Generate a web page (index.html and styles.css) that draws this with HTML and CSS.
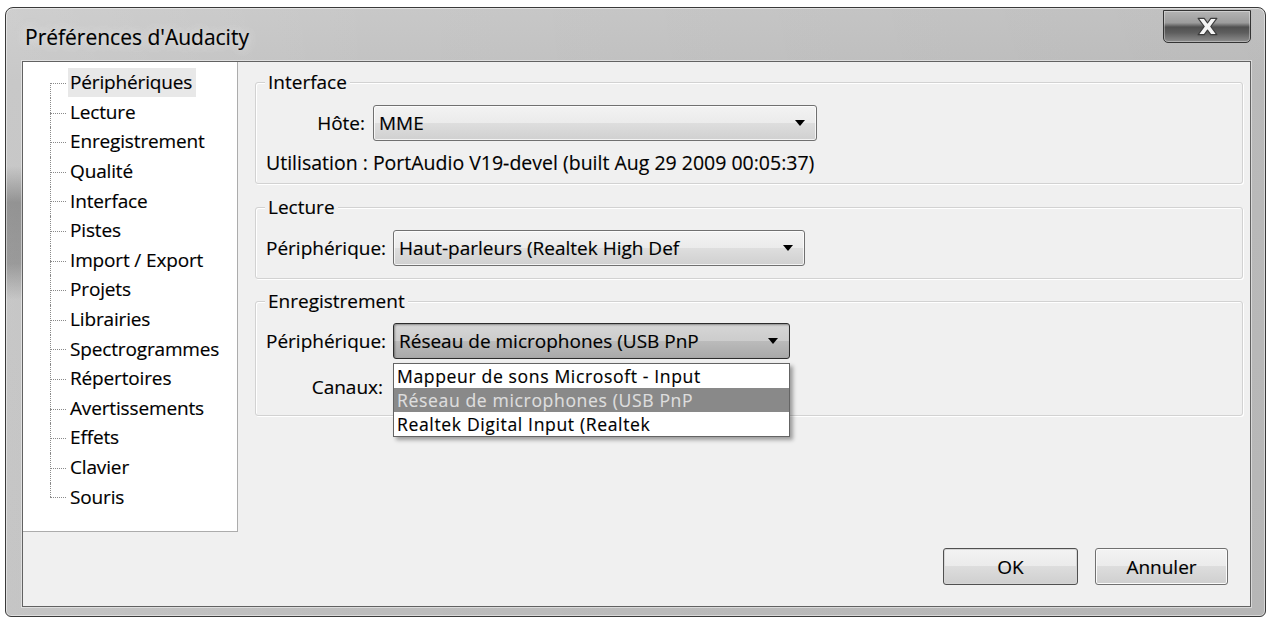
FILE: index.html
```html
<!DOCTYPE html>
<html lang="fr">
<head>
<meta charset="utf-8">
<title>Préférences d'Audacity</title>
<link rel="stylesheet" href="styles.css">
</head>
<body>
<div class="window">
  <div class="titlebar">
    <span class="title">Préférences d'Audacity</span>
    <button class="close" aria-label="Fermer">
      <svg width="21" height="19" viewBox="0 0 18 16"><polygon points="1,1 6.2,1 9,5 11.8,1 17,1 11.8,8 17,15 11.8,15 9,11 6.2,15 1,15 6.2,8" fill="#f6f6f6" stroke="#3c3c3c" stroke-width="1" stroke-linejoin="round"/></svg>
    </button>
  </div>
  <div class="client">
    <div class="main">
      <ul class="tree">
        <li><span class="sel">Périphériques</span></li>
        <li><span>Lecture</span></li>
        <li><span>Enregistrement</span></li>
        <li><span>Qualité</span></li>
        <li><span>Interface</span></li>
        <li><span>Pistes</span></li>
        <li><span>Import / Export</span></li>
        <li><span>Projets</span></li>
        <li><span>Librairies</span></li>
        <li><span>Spectrogrammes</span></li>
        <li><span>Répertoires</span></li>
        <li><span>Avertissements</span></li>
        <li><span>Effets</span></li>
        <li><span>Clavier</span></li>
        <li><span>Souris</span></li>
      </ul>
      <div class="panel">
        <fieldset class="group g-interface">
          <legend>Interface</legend>
          <div class="row">
            <label class="lbl lbl-host">Hôte:</label>
            <div class="combo w-host"><span>MME</span><i class="arrow"></i></div>
          </div>
          <div class="info">Utilisation : PortAudio V19-devel (built Aug 29 2009 00:05:37)</div>
        </fieldset>
        <fieldset class="group g-play">
          <legend>Lecture</legend>
          <div class="row">
            <label class="lbl">Périphérique:</label>
            <div class="combo w-play"><span>Haut-parleurs (Realtek High Def</span><i class="arrow"></i></div>
          </div>
        </fieldset>
        <fieldset class="group g-rec">
          <legend>Enregistrement</legend>
          <div class="row">
            <label class="lbl">Périphérique:</label>
            <div class="combo-wrap">
              <div class="combo open w-rec"><span>Réseau de microphones (USB PnP</span><i class="arrow"></i></div>
              <ul class="popup">
                <li>Mappeur de sons Microsoft - Input</li>
                <li class="hl">Réseau de microphones (USB PnP</li>
                <li>Realtek Digital Input (Realtek</li>
              </ul>
            </div>
          </div>
          <div class="row row-second">
            <label class="lbl">Canaux:</label>
          </div>
        </fieldset>
      </div>
    </div>
    <div class="buttons">
      <button class="btn btn-ok">OK</button>
      <button class="btn btn-cancel">Annuler</button>
    </div>
  </div>
</div>
</body>
</html>
```
FILE: styles.css
```css
* { box-sizing: border-box; }

html, body {
  margin: 0;
  padding: 0;
  background: #ffffff;
}

body {
  font-family: "Open Sans", "Noto Sans", "DejaVu Sans", sans-serif;
  font-size: 19px;
  color: #000;
  -webkit-text-stroke: 0.15px #000;
}

.window {
  margin: 7px 0 0 5px;
  width: 1261px;
  height: 610px;
  border: 1px solid #3a3a3a;
  border-radius: 8px 8px 6px 6px;
  padding: 0 14px 9px 16px;
  display: flex;
  flex-direction: column;
  background:
    linear-gradient(to bottom, transparent 26%, rgba(50,50,50,.35) 32%, rgba(50,50,50,.3) 42%, transparent 48%) 0 0 / 16px 100% no-repeat,
    linear-gradient(to right, rgba(255,255,255,.12) 0%, rgba(255,255,255,0) 30%, rgba(0,0,0,.04) 100%),
    linear-gradient(to bottom, #c8c8c8 0%, #c1c1c1 12%, #bdbdbd 100%);
  box-shadow: inset 0 0 0 1px rgba(255,255,255,.45);
}

.titlebar {
  height: 53px;
  flex: none;
  display: flex;
  justify-content: space-between;
  align-items: flex-start;
}

.title {
  margin: 15px 0 0 3px;
  font-size: 21px;
  line-height: 28px;
  color: #000;
  text-shadow: 0 0 8px #e4e4e4, 0 0 16px rgba(230,230,230,.9);
}

.close {
  margin-top: 2px;
  width: 88px;
  height: 33px;
  padding: 0;
  border: 1px solid #343434;
  border-radius: 0 0 5px 5px;
  background: linear-gradient(to bottom, #b4b4b4 0%, #9c9c9c 38%, #505050 52%, #5e5e5e 70%, #8e8e8e 100%);
  box-shadow: inset 0 0 0 1px rgba(255,255,255,.35);
  display: flex;
  align-items: center;
  justify-content: center;
}

.client {
  flex: 1;
  border: 1px solid #626262;
  background: #f0f0f0;
  display: flex;
  flex-direction: column;
  box-shadow: 0 0 0 1px rgba(255,255,255,.45);
}

.main {
  height: 470px;
  flex: none;
  display: flex;
}

/* tree */
.tree {
  width: 215px;
  flex: none;
  margin: 0;
  padding: 6.2px 0 0 0;
  list-style: none;
  background: #fff;
  border-right: 1px solid #acacac;
  border-bottom: 1px solid #acacac;
}

.tree li {
  position: relative;
  height: 29.6px;
  line-height: 29.6px;
  padding-left: 45px;
  white-space: nowrap;
}

.tree li::before {
  content: "";
  position: absolute;
  left: 27px;
  top: 50%;
  width: 16px;
  border-top: 1px dotted #8a8a8a;
}

.tree li::after {
  content: "";
  position: absolute;
  left: 27px;
  top: 0;
  bottom: 0;
  border-left: 1px dotted #8a8a8a;
}

.tree li:first-child::after { top: 50%; }
.tree li:last-child::after { bottom: 50%; }

.tree span {
  display: inline-block;
  padding: 0 4px 0 2px;
  line-height: 29px;
  letter-spacing: -0.15px;
}

.tree .sel { background: #e8e8e8; }

/* right panel */
.panel {
  flex: 1;
  padding: 8px 7px 0 17px;
}

.group {
  margin: 0;
  padding: 0 10px 8px 10px;
  min-width: 0;
  border: 1px solid #d2d2d2;
  border-radius: 3px;
  box-shadow: inset 1px 1px 0 #fff, 1px 1px 0 #fff;
}

.group legend {
  padding: 0 3px;
  margin-left: -1px;
  line-height: 24px;
  background: #f0f0f0;
}

.g-play { margin-top: 11px; padding-bottom: 12px; }
.g-rec { margin-top: 10px; padding-bottom: 10px; }

.row {
  display: flex;
  align-items: center;
  gap: 10px;
  height: 36px;
  line-height: 24px;
}

.g-interface .row { margin-top: 11px; gap: 8px; }
.g-play .row { margin-top: 11px; }
.g-rec .row { margin-top: 10px; }

.lbl {
  flex: none;
  width: 117px;
  text-align: right;
  white-space: nowrap;
}

.lbl-host { width: 99px; }

.info {
  margin-top: 10px;
  line-height: 24px;
  font-size: 19.5px;
  white-space: nowrap;
}

.combo {
  height: 36px;
  border: 1px solid #707070;
  border-radius: 3px;
  background: linear-gradient(to bottom, #f3f3f3 0%, #ebebeb 50%, #dedede 50%, #d0d0d0 100%);
  box-shadow: inset 0 0 0 1px rgba(255,255,255,.75);
  padding-left: 5px;
  display: flex;
  align-items: center;
  justify-content: space-between;
  line-height: 24px;
  white-space: nowrap;
}

.w-host { width: 444px; }
.w-play { width: 412px; }
.w-rec { width: 397px; }

.combo.open {
  border-color: #2c2c2c;
  background: linear-gradient(to bottom, #d6d6d6 0%, #cccccc 50%, #bbbbbb 50%, #a9a9a9 100%);
  box-shadow: inset 1px 1px 2px rgba(0,0,0,.35);
}

.arrow {
  flex: none;
  width: 0;
  height: 0;
  margin-right: 11px;
  border-left: 5px solid transparent;
  border-right: 5px solid transparent;
  border-top: 6px solid #000;
}

.combo-wrap {
  position: relative;
}

.popup {
  position: absolute;
  left: 0;
  top: 40px;
  width: 397px;
  margin: 0;
  padding: 0;
  list-style: none;
  background: #fff;
  border: 1px solid #646464;
  box-shadow: 3px 3px 4px rgba(0,0,0,.35);
  z-index: 2;
}

.popup li {
  height: 24px;
  line-height: 24px;
  padding-left: 3px;
  font-size: 17.6px;
  letter-spacing: 0.62px;
  white-space: nowrap;
}

.popup li.hl {
  background: #898989;
  color: #dedede;
  -webkit-text-stroke: 0.15px #dedede;
}

/* buttons */
.buttons {
  display: flex;
  justify-content: flex-end;
  gap: 17px;
  margin-top: 16px;
  padding-right: 22px;
}

.btn {
  height: 37px;
  padding: 0;
  font-family: inherit;
  font-size: 19px;
  line-height: 24px;
  color: #000;
  border: 1px solid #707070;
  border-radius: 3px;
  background: linear-gradient(to bottom, #f3f3f3 0%, #ebebeb 50%, #dddddd 50%, #cfcfcf 100%);
  box-shadow: inset 0 0 0 1px #fbfbfb;
  -webkit-text-stroke: 0.15px #000;
}

.btn-ok {
  width: 135px;
  border-color: #505050;
  box-shadow: inset 0 0 0 1px #d6d6d6;
}

.btn-cancel { width: 133px; }
```
